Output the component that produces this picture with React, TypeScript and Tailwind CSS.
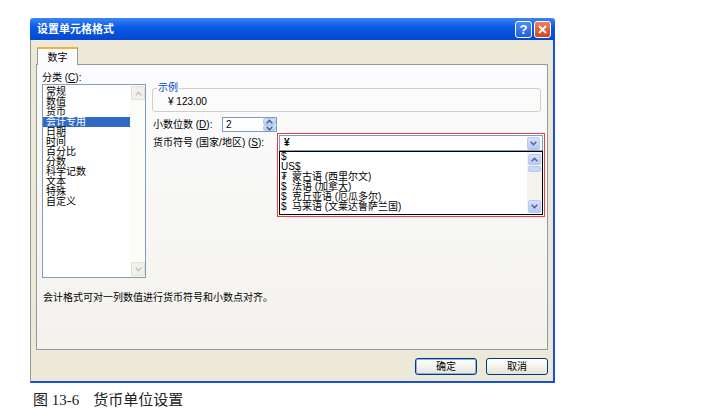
const ui = "font-['Liberation_Sans','Noto_Sans_CJK_SC',sans-serif]";

const categories = ['常规', '数值', '货币', '会计专用', '日期', '时间', '百分比', '分数', '科学记数', '文本', '特殊', '自定义'];

const symbols: ReadonlyArray<readonly [string, string]> = [
  ['$', ''],
  ['US$', ''],
  ['₮', '蒙古语 (西里尔文)'],
  ['$', '法语 (加拿大)'],
  ['$', '克丘亚语 (厄瓜多尔)'],
  ['$', '马来语 (文莱达鲁萨兰国)'],
];

function Chevron({ dir, color }: { readonly dir: 'up' | 'down'; readonly color: string }) {
  return (
    <svg width="7" height="5" viewBox="0 0 7 5">
      <polyline
        points={dir === 'up' ? '0.7,4.2 3.5,1.3 6.3,4.2' : '0.7,0.8 3.5,3.7 6.3,0.8'}
        fill="none"
        stroke={color}
        strokeWidth="1.5"
      />
    </svg>
  );
}

function BlueButton({ dir, className }: { readonly dir: 'up' | 'down'; readonly className: string }) {
  return (
    <div
      className={`flex items-center justify-center rounded-[2px] border border-[#b7c9f3] bg-linear-to-b from-[#d7e3fd] to-[#b4c9f7] ${className}`}
    >
      <Chevron dir={dir} color="#4d6185" />
    </div>
  );
}

function PaleButton({ dir }: { readonly dir: 'up' | 'down' }) {
  return (
    <div className="flex h-[14px] w-[14px] items-center justify-center rounded-[2px] border border-[#e3e1d6] bg-[#f1f0ea]">
      <Chevron dir={dir} color="#c9c7ba" />
    </div>
  );
}

export default function App() {
  return (
    <div className={`h-[419px] w-[701px] overflow-hidden bg-white pl-[30px] pt-[18px] ${ui}`}>
      <div className="w-[525px]">
        {/* title bar */}
        <div className="flex h-[22px] items-center rounded-t-[3px] bg-linear-to-b from-[#3a86f6] via-[#0a5ae6] via-40% to-[#0447d2] pl-[7px] pr-[4px]">
          <span className="text-[11px] font-bold leading-[12px] text-white">设置单元格格式</span>
          <div className="ml-auto flex gap-[2px]">
            <div className="flex h-[17px] w-[17px] items-center justify-center rounded-[3px] border border-white bg-linear-to-b from-[#4f8cf6] to-[#1d5ee6] text-[13px] font-bold leading-[13px] text-white">
              ?
            </div>
            <div className="flex h-[17px] w-[17px] items-center justify-center rounded-[3px] border border-white bg-linear-to-b from-[#ec7e5c] to-[#d4431f]">
              <svg width="9" height="9" viewBox="0 0 9 9">
                <path d="M1 1 L8 8 M8 1 L1 8" stroke="white" strokeWidth="1.8" />
              </svg>
            </div>
          </div>
        </div>

        {/* body */}
        <div className="h-[343px] border-b-2 border-l border-r-2 border-b-[#1a4fd6] border-l-[#9a9890] border-r-[#1a4fd6] bg-[#ece9d8]">
          <div className="pl-[6px] pt-[7px]">
            <div className="relative z-10 -mb-px flex h-[18px] w-[41px] items-center justify-center border-x border-t-2 border-x-[#919b9c] border-t-[#f4b23c] bg-[#fcfcfe] text-[10px] leading-[11px] text-black">
              数字
            </div>
          </div>

          {/* panel */}
          <div className="ml-[5px] h-[286px] w-[512px] border border-[#919b9c] bg-linear-to-b from-[#fcfcfe] to-[#f3f2ed] pl-[5px] pt-[6px] text-[10px] text-black">
            <div className="flex">
              <div className="w-[104px]">
                <div className="h-[13px] leading-[13px]">
                  分类 (<span className="underline">C</span>):
                </div>
                <div className="flex h-[194px] border border-[#7f9db9] bg-white">
                  <div className="flex-1 pt-[2px]">
                    {categories.map((c) => (
                      <div
                        key={c}
                        className={
                          c === '会计专用'
                            ? 'h-[10px] bg-[#316ac5] pl-[3px] leading-[10px] text-white'
                            : 'h-[10px] pl-[3px] leading-[10px]'
                        }
                      >
                        {c}
                      </div>
                    ))}
                  </div>
                  <div className="flex w-[15px] flex-col justify-between bg-[#fbfbf8] p-px">
                    <PaleButton dir="up" />
                    <PaleButton dir="down" />
                  </div>
                </div>
              </div>

              <div className="ml-[6px] w-[394px]">
                {/* sample group */}
                <div className="relative mt-[17px] h-[24px] w-[389px] rounded-[3px] border border-[#d0d0bf]">
                  <span className="absolute -top-[7px] left-[4px] bg-[#fbfbfb] px-px leading-[12px] text-[#0046d5]">示例</span>
                  <div className="pl-[15px] pt-[7px] leading-[12px]">¥ 123.00</div>
                </div>

                {/* decimals */}
                <div className="mt-[5px] flex h-[15px] items-center">
                  <div className="w-[70px] pl-px leading-[12px]">
                    小数位数 (<span className="underline">D</span>):
                  </div>
                  <div className="flex h-[15px] w-[55px] items-center border border-[#7f9db9] bg-white">
                    <span className="flex-1 pl-[3px] leading-[12px]">2</span>
                    <div className="flex h-[13px] w-[13px] flex-col">
                      <BlueButton dir="up" className="h-[7px] w-[13px]" />
                      <BlueButton dir="down" className="h-[6px] w-[13px]" />
                    </div>
                  </div>
                </div>

                {/* currency */}
                <div className="mt-px flex">
                  <div className="w-[125px] pl-px pt-[4px] leading-[12px]">
                    货币符号 (国家/地区) (<span className="underline">S</span>):
                  </div>
                  <div className="h-[84px] w-[268px] border border-[#f03c3c] p-px">
                    <div className="flex h-[16px] items-center border border-[#7f9db9] bg-white pr-[2px]">
                      <span className="flex-1 pl-[4px] font-bold leading-[12px]">¥</span>
                      <BlueButton dir="down" className="h-[13px] w-[13px]" />
                    </div>
                    <div className="flex h-[64px] border border-black bg-white">
                      <div className="flex-1">
                        {symbols.map(([sym, name]) => (
                          <div key={sym + name} className="flex h-[10px] whitespace-nowrap pl-px leading-[10px]">
                            <span className={name ? 'w-[11px]' : ''}>{sym}</span>
                            {name}
                          </div>
                        ))}
                      </div>
                      <div className="flex w-[15px] flex-col bg-[#f4f3ee] px-px pt-[2px]">
                        <BlueButton dir="up" className="h-[11px] w-[13px]" />
                        <div className="mt-px h-[6px] w-[13px] rounded-[2px] border border-[#b7c9f3] bg-[#c7d7fb]" />
                        <div className="flex-1" />
                        <BlueButton dir="down" className="mb-px h-[13px] w-[13px]" />
                      </div>
                    </div>
                  </div>
                </div>
              </div>
            </div>

            <div className="ml-px mt-[14px] leading-[12px]">会计格式可对一列数值进行货币符号和小数点对齐。</div>
          </div>

          {/* buttons */}
          <div className="mt-[8px] flex justify-end gap-[9px] pr-[5px] text-[10px]">
            <button
              type="button"
              className="flex h-[17px] w-[62px] items-center justify-center rounded-[3px] border border-[#003c74] bg-linear-to-b from-white to-[#e6e4dc] leading-[11px] text-black shadow-[inset_0_0_0_1px_#8fb1f0]"
            >
              确定
            </button>
            <button
              type="button"
              className="flex h-[17px] w-[62px] items-center justify-center rounded-[3px] border border-[#003c74] bg-linear-to-b from-white to-[#e6e4dc] leading-[11px] text-black"
            >
              取消
            </button>
          </div>
        </div>
      </div>

      <div className="ml-[3px] mt-[8px] font-['Liberation_Serif','Noto_Sans_CJK_SC',serif] text-[15px] leading-[18px] text-[#222]">
        图 13-6<span className="ml-[14px]">货币单位设置</span>
      </div>
    </div>
  );
}
